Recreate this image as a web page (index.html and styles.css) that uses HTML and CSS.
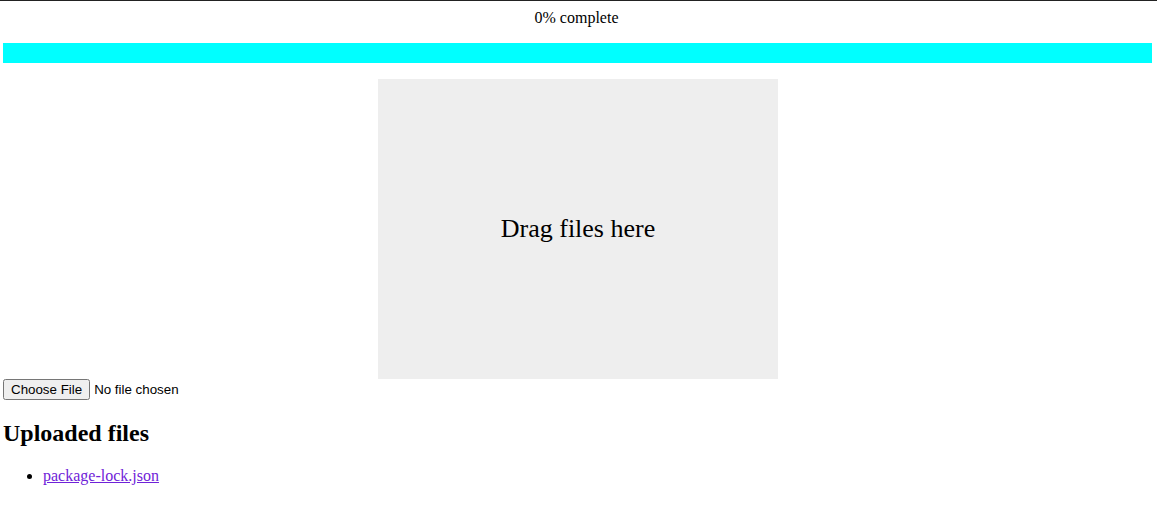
FILE: index.html
```html
<!DOCTYPE html>
<html>
<head>
<meta charset="utf-8">
<title>Upload</title>
<link rel="stylesheet" href="styles.css">
</head>
<body>
<div class="topline"></div>
<main class="page">
  <p class="status">0% complete</p>
  <div class="bar"></div>
  <div class="drop">Drag files here</div>
  <div class="picker"><input type="file" class="file"></div>
  <h2 class="title">Uploaded files</h2>
  <ul class="files">
    <li><a href="#" class="file-link">package-lock.json</a></li>
  </ul>
</main>
</body>
</html>
```

FILE: styles.css
```css
html, body {
  margin: 0;
  padding: 0;
  background: #fff;
}
body {
  font-family: "Liberation Serif", "Times New Roman", serif;
  font-size: 16px;
  color: #000;
}
.topline {
  height: 1px;
  background: #222;
}
.page {
  padding: 0 4px 0 3px;
}
.status {
  margin: 0 3px 0 0;
  padding-top: 8px;
  line-height: 18px;
  text-align: center;
}
.bar {
  margin: 16px 1px 0 0;
  height: 20px;
  background: #00ffff;
}
.drop {
  width: 400px;
  height: 300px;
  margin: 16px auto 0;
  background: #eeeeee;
  display: flex;
  align-items: center;
  justify-content: center;
  font-size: 26px;
}
.picker {
  line-height: 20px;
}
.file {
  font-family: "Liberation Sans", Arial, sans-serif;
  font-size: 13.33px;
}
.title {
  font-size: 24px;
  font-weight: bold;
  margin: 19px 0 0;
  line-height: 28px;
}
.files {
  margin: 20px 0 0;
  padding-left: 40px;
  line-height: 18px;
}
.file-link {
  color: #6f22d8;
}
```
